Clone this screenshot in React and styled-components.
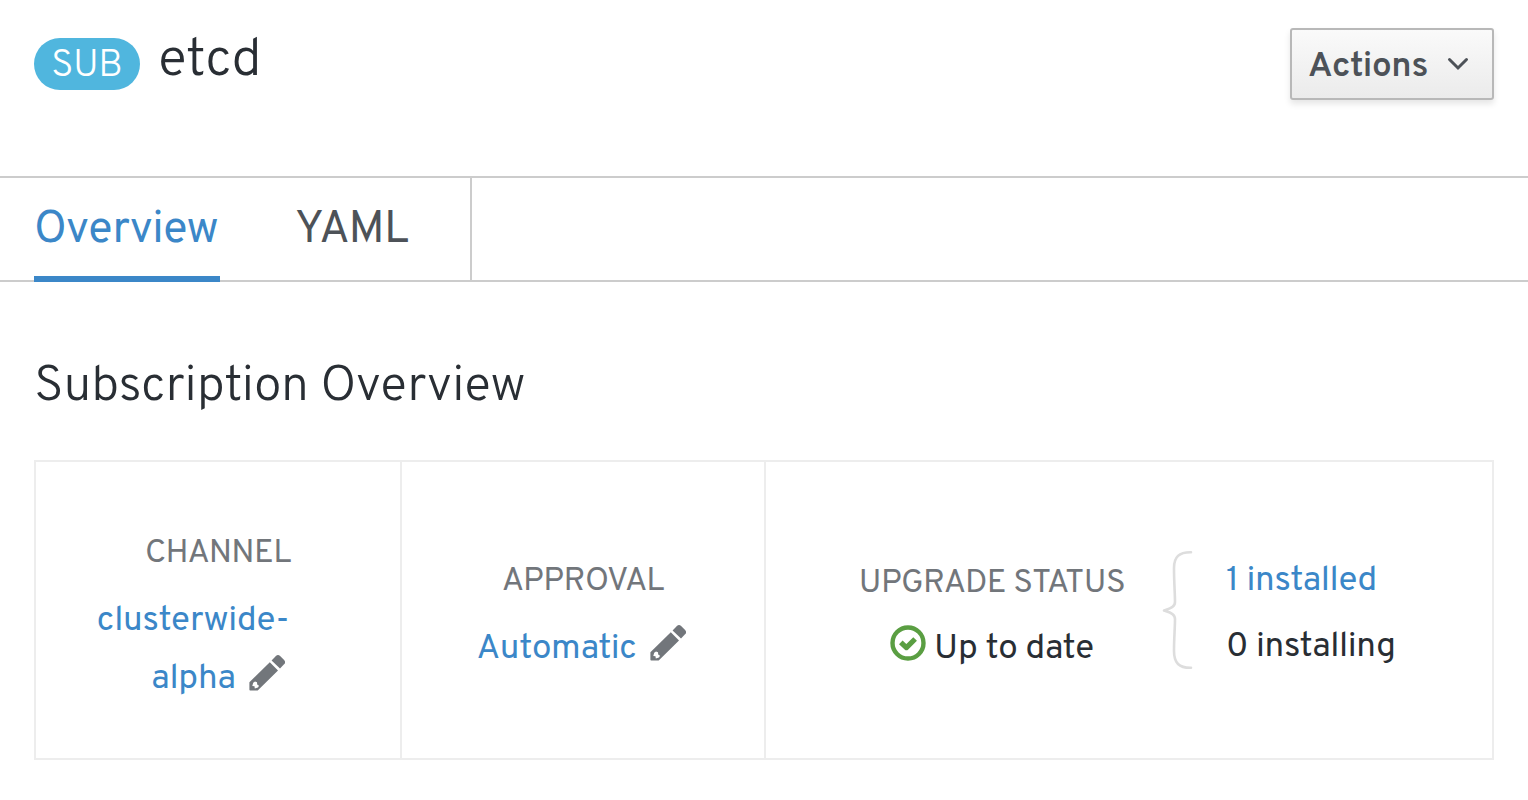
import React from "react";
import styled, { createGlobalStyle } from "styled-components";

const GlobalStyle = createGlobalStyle`
  *, *::before, *::after { box-sizing: border-box; }
  body {
    margin: 0;
    background: #fff;
    color: #292e34;
    font-family: Overpass, Roboto, "Open Sans", sans-serif;
    font-weight: 400;
    white-space: nowrap;
  }
  h1, h2 { margin: 0; font-weight: 300; }
  svg { display: block; flex: none; }
`;

const Page = styled.main`
  width: 1528px;
  height: 800px;
  overflow: hidden;
`;

const Header = styled.header`
  display: flex;
  align-items: flex-start;
  height: 176px;
  padding: 0 34px;
`;

const Badge = styled.span`
  width: 106px;
  height: 52px;
  margin-top: 38px;
  padding-left: 17px;
  border-radius: 26px;
  background: #50b6de;
  color: #fff;
  font-size: 38px;
  font-weight: 300;
  line-height: 57px;
  letter-spacing: -0.5px;
`;

const Title = styled.h1`
  margin: 30px auto 0 18px;
  font-size: 54px;
  line-height: 64px;
  letter-spacing: -0.3px;
`;

const ActionsButton = styled.button`
  display: flex;
  align-items: center;
  justify-content: space-between;
  width: 204px;
  height: 72px;
  margin-top: 28px;
  padding: 0 23px 0 16px;
  border: 2px solid #b8b8b8;
  border-radius: 3px;
  background: linear-gradient(#fafafa, #ebebeb);
  box-shadow: 0 4px 6px rgba(3, 3, 3, 0.1);
  color: #4d5258;
  font: 600 35px/68px Overpass, Roboto, sans-serif;
  letter-spacing: -0.2px;
`;

const ActionsText = styled.span`
  padding-top: 5px;
`;

const Tabs = styled.nav`
  display: flex;
  height: 106px;
  padding-left: 34px;
  border-top: 2px solid #ccc;
  box-shadow: inset 0 -2px #ccc;
`;

const Tab = styled.a`
  height: 104px;
  margin-right: ${(p) => (p.$active ? 75 : 0)}px;
  width: ${(p) => (p.$active ? 186 : 177)}px;
  border-bottom: ${(p) => (p.$active ? "6px solid #3b87c8" : "0")};
  border-right: ${(p) => (p.$active ? "0" : "2px solid #ccc")};
  color: ${(p) => (p.$active ? "#3b87c8" : "#4d5258")};
  font-size: 45px;
  line-height: 106px;
  letter-spacing: -0.5px;
`;

const SectionTitle = styled.h2`
  margin: 75px 0 0 34px;
  height: 103px;
  font-size: 50px;
  line-height: 62px;
  letter-spacing: -0.2px;
`;

const Card = styled.section`
  display: grid;
  grid-template-columns: 366px 364px 1fr;
  width: 1460px;
  height: 300px;
  margin-left: 34px;
  border: 2px solid #ededed;
`;

const Cell = styled.div`
  display: flex;
  flex-direction: column;
  align-items: center;
  padding-top: ${(p) => p.$top}px;
  border-right: 2px solid #ededed;
`;

const StatusCell = styled.div`
  display: flex;
  align-items: flex-start;
  padding-left: 93px;
`;

const StatusBlock = styled.div`
  display: flex;
  flex-direction: column;
  align-items: center;
  width: 266px;
  margin: 102px 37px 0 0;
`;

const Label = styled.div`
  margin-bottom: ${(p) => p.$gap ?? 18}px;
  color: #72767b;
  font-size: 33px;
  line-height: 40px;
  letter-spacing: -0.5px;
`;

const Value = styled.div`
  display: flex;
  gap: ${(p) => p.$gap ?? 13}px;
  padding-right: ${(p) => p.$shift ?? 0}px;
  color: ${(p) => (p.$link ? "#3b87c8" : "#292e34")};
  font-size: 35px;
  line-height: 58px;
  letter-spacing: -0.22px;

  svg { margin-top: 5px; }
`;

const InstallList = styled.div`
  margin: 86px 0 0 33px;
`;

const InstallItem = styled.div`
  color: ${(p) => (p.$link ? "#3b87c8" : "#292e34")};
  font-size: 35px;
  line-height: 66px;
  letter-spacing: -0.35px;
`;

const BraceIcon = styled.svg`
  margin-top: 88px;
`;

const Pencil = () => (
  <svg width="36" height="36" viewBox="0 0 36 36" fill="#72767b">
    <path
      fillRule="evenodd"
      d="M0.400 27.200 20.800 7.300 29 15.600 8.700 35.500H1.200a.8.8 0 0 1-.8-.8ZM4.200 27.800 3.300 31 5.500 31.200 5.800 33.500 9 32.400 10 30.800 8.200 29.500 8 27.200 6 26.500Z"
    />
    <path d="M22.600 5.400 26.900 1.100a3 3 0 0 1 4.200 0l4 4a3 3 0 0 1 0 4.200L31 13.400Z" />
  </svg>
);

const Check = () => (
  <svg width="36" height="36" viewBox="0 0 36 36" fill="none" stroke="#5a9e42">
    <circle cx="18" cy="18" r="15.500" strokeWidth="4.400" />
    <path d="m10.800 17.300 5.600 5.300 8.700-8.600" strokeWidth="5.200" strokeLinejoin="round" />
  </svg>
);

const Brace = () => (
  <BraceIcon width="31" height="120" viewBox="0 0 31 120" fill="none">
    <path
      d="M29 2.200C17 2 12 7 12 18c0 14 1 26 1 34 0 6-7 7-11 8.500 4 1.500 11 2.500 11 8.500 0 8-1 20-1 32 0 12 5 17 17 16.800"
      stroke="#ddd"
      strokeWidth="2.600"
      strokeLinecap="round"
      strokeLinejoin="round"
    />
  </BraceIcon>
);

export default function App() {
  return (
    <Page>
      <GlobalStyle />
      <Header>
        <Badge>SUB</Badge>
        <Title>etcd</Title>
        <ActionsButton>
          <ActionsText>Actions</ActionsText>
          <svg width="22" height="14" viewBox="0 0 22 14" fill="none">
            <path d="m2.500 2.500 8.500 8.500 8.500-8.500" stroke="#4d5258" strokeWidth="3" strokeLinecap="round" />
          </svg>
        </ActionsButton>
      </Header>
      <Tabs>
        <Tab $active>Overview</Tab>
        <Tab>YAML</Tab>
      </Tabs>
      <SectionTitle>Subscription Overview</SectionTitle>
      <Card>
        <Cell $top={72}>
          <Label>CHANNEL</Label>
          <Value $link $shift={50}>clusterwide-</Value>
          <Value $link>alpha<Pencil /></Value>
        </Cell>
        <Cell $top={100}>
          <Label>APPROVAL</Label>
          <Value $link $shift={4}>Automatic<Pencil /></Value>
        </Cell>
        <StatusCell>
          <StatusBlock>
            <Label $gap={16}>UPGRADE STATUS</Label>
            <Value $gap={8}><Check />Up to date</Value>
          </StatusBlock>
          <Brace />
          <InstallList>
            <InstallItem $link>1 installed</InstallItem>
            <InstallItem>0 installing</InstallItem>
          </InstallList>
        </StatusCell>
      </Card>
    </Page>
  );
}
